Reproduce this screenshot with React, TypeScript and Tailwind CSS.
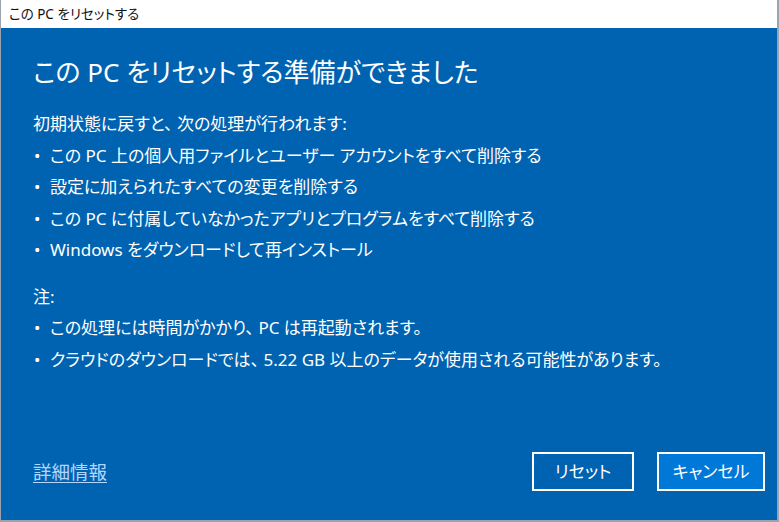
const jp = {
  fontFamily: '"Noto Sans", "Noto Sans CJK JP", sans-serif',
  fontFeatureSettings: '"palt"',
}

const removals = [
  'この PC 上の個人用ファイルとユーザー アカウントをすべて削除する',
  '設定に加えられたすべての変更を削除する',
  'この PC に付属していなかったアプリとプログラムをすべて削除する',
  'Windows をダウンロードして再インストール',
]

const notes = [
  'この処理には時間がかかり、 PC は再起動されます。',
  'クラウドのダウンロードでは、 5.22 GB 以上のデータが使用される可能性があります。',
]

function Bullet({ text }: { text: string }) {
  return (
    <li className="flex h-[31.5px] items-center">
      <span className="w-[17px] pl-[1px] text-[17px] leading-none">•</span>
      <span>{text}</span>
    </li>
  )
}

export default function App() {
  return (
    <div
      className="flex h-[522px] w-[779px] flex-col overflow-hidden border-r-2 border-b-2 border-l border-[#9ca3af] bg-white"
      style={jp}
    >
      <div className="flex h-[28px] shrink-0 items-center pl-[8px] text-[13.5px] text-[#111]">
        この PC をリセットする
      </div>

      <div className="flex flex-1 flex-col bg-[#0063b1] pl-[32px] pr-[12px] pt-[28px] pb-[29px] text-white">
        <h1 className="h-[32px] text-[26px] leading-[32px] font-normal">
          この PC をリセットする準備ができました
        </h1>

        <div className="mt-[20px] text-[17px]">
          <p className="flex h-[31.5px] items-center">初期状態に戻すと、 次の処理が行われます:</p>
          <ul>
            {removals.map(t => (
              <Bullet key={t} text={t} />
            ))}
          </ul>

          <p className="mt-[15px] flex h-[31.5px] items-center">注:</p>
          <ul>
            {notes.map(t => (
              <Bullet key={t} text={t} />
            ))}
          </ul>
        </div>

        <div className="mt-auto flex items-center">
          <a className="text-[18.5px] text-[#b0d8ff] underline underline-offset-[3px]" href="#">
            詳細情報
          </a>
          <div className="ml-auto flex gap-[23px]">
            <button className="h-[39px] w-[102px] border-2 border-white text-[17px]">リセット</button>
            <button className="h-[39px] w-[108px] border-2 border-white bg-[#0078d7] text-[17px]">
              キャンセル
            </button>
          </div>
        </div>
      </div>
    </div>
  )
}
